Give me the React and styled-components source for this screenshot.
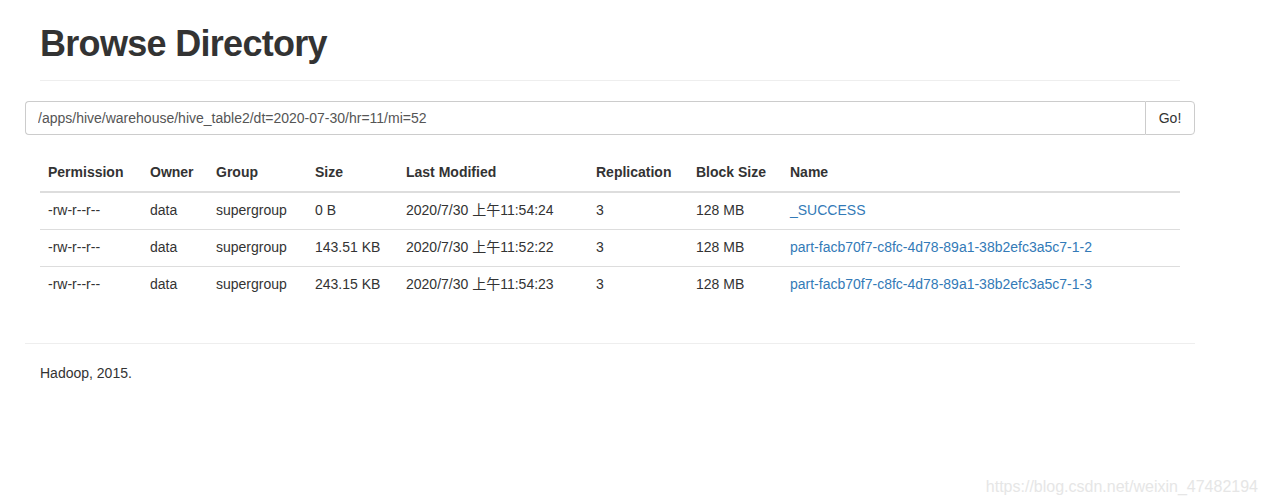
import styled, { createGlobalStyle } from "styled-components";

const rows = [
    { perm: '-rw-r--r--', owner: 'data', group: 'supergroup', size: '0 B', modified: '2020/7/30 上午11:54:24', repl: '3', block: '128 MB', name: '_SUCCESS' },
    { perm: '-rw-r--r--', owner: 'data', group: 'supergroup', size: '143.51 KB', modified: '2020/7/30 上午11:52:22', repl: '3', block: '128 MB', name: 'part-facb70f7-c8fc-4d78-89a1-38b2efc3a5c7-1-2' },
    { perm: '-rw-r--r--', owner: 'data', group: 'supergroup', size: '243.15 KB', modified: '2020/7/30 上午11:54:23', repl: '3', block: '128 MB', name: 'part-facb70f7-c8fc-4d78-89a1-38b2efc3a5c7-1-3' },
];

const columns = [
    ['Permission', 102], ['Owner', 66], ['Group', 99], ['Size', 91],
    ['Last Modified', 190], ['Replication', 100], ['Block Size', 94], ['Name', 398],
];

const App = () => {
    return (
        <>
            <GlobalStyle />
            <Container>
                <PageHeader>
                    <Title>Browse Directory</Title>
                </PageHeader>
                <InputGroup>
                    <PathInput defaultValue="/apps/hive/warehouse/hive_table2/dt=2020-07-30/hr=11/mi=52" />
                    <GoButton>Go!</GoButton>
                </InputGroup>
                <Table>
                    <colgroup>
                        {columns.map(([label, width]) => (
                            <col key={label} style={{ width }} />
                        ))}
                    </colgroup>
                    <thead>
                        <tr>
                            {columns.map(([label]) => (
                                <Th key={label}>{label}</Th>
                            ))}
                        </tr>
                    </thead>
                    <tbody>
                        {rows.map((row) => (
                            <tr key={row.name}>
                                <Td>{row.perm}</Td>
                                <Td>{row.owner}</Td>
                                <Td>{row.group}</Td>
                                <Td>{row.size}</Td>
                                <Td>{row.modified}</Td>
                                <Td>{row.repl}</Td>
                                <Td>{row.block}</Td>
                                <Td><FileLink href="#">{row.name}</FileLink></Td>
                            </tr>
                        ))}
                    </tbody>
                </Table>
                <Footer>
                    <FooterText>Hadoop, 2015.</FooterText>
                </Footer>
            </Container>
            <Watermark>https://blog.csdn.net/weixin_47482194</Watermark>
        </>
    );
}

export default App;


const GlobalStyle = createGlobalStyle`
    body {
        margin: 0;
        background: #fff;
        color: #333;
        font-family: "Liberation Sans", "Noto Sans CJK SC", sans-serif;
        font-size: 14px;
        line-height: 1.42857;
    }
`;

const Container = styled.div`
    width: 1170px;
    margin-left: 25px;
`;

const PageHeader = styled.div`
    margin: 0 15px 20px;
    padding: 24px 0 16px;
    border-bottom: 1px solid #eee;
`;

const Title = styled.h1`
    margin: 0;
    font-size: 36px;
    font-weight: 700;
    line-height: 1.1;
    letter-spacing: -0.7px;
`;

const InputGroup = styled.div`
    display: flex;
    height: 34px;
`;

const PathInput = styled.input`
    flex: 1;
    box-sizing: border-box;
    height: 34px;
    padding: 6px 12px;
    border: 1px solid #ccc;
    border-right: none;
    border-radius: 4px 0 0 4px;
    font-family: inherit;
    font-size: 14px;
    color: #555;
    outline: none;
`;

const GoButton = styled.button`
    box-sizing: border-box;
    width: 50px;
    height: 34px;
    border: 1px solid #ccc;
    border-radius: 0 4px 4px 0;
    background: #fff;
    font-family: inherit;
    font-size: 14px;
    color: #333;
`;

const Table = styled.table`
    width: 1140px;
    margin: 20px 15px 40px;
    border-collapse: collapse;
    table-layout: fixed;
`;

const Th = styled.th`
    padding: 8px;
    text-align: left;
    font-weight: 700;
    border-bottom: 2px solid #ddd;
    white-space: nowrap;
`;

const Td = styled.td`
    padding: 8px;
    border-top: 1px solid #ddd;
    white-space: nowrap;
`;

const FileLink = styled.a`
    color: #337ab7;
    text-decoration: none;
`;

const Footer = styled.div`
    border-top: 1px solid #eee;
    padding: 20px 15px;
`;

const FooterText = styled.p`
    margin: 0;
`;

const Watermark = styled.div`
    position: absolute;
    right: 11px;
    top: 476px;
    font-size: 16px;
    color: #e6e6e6;
    white-space: nowrap;
`;
